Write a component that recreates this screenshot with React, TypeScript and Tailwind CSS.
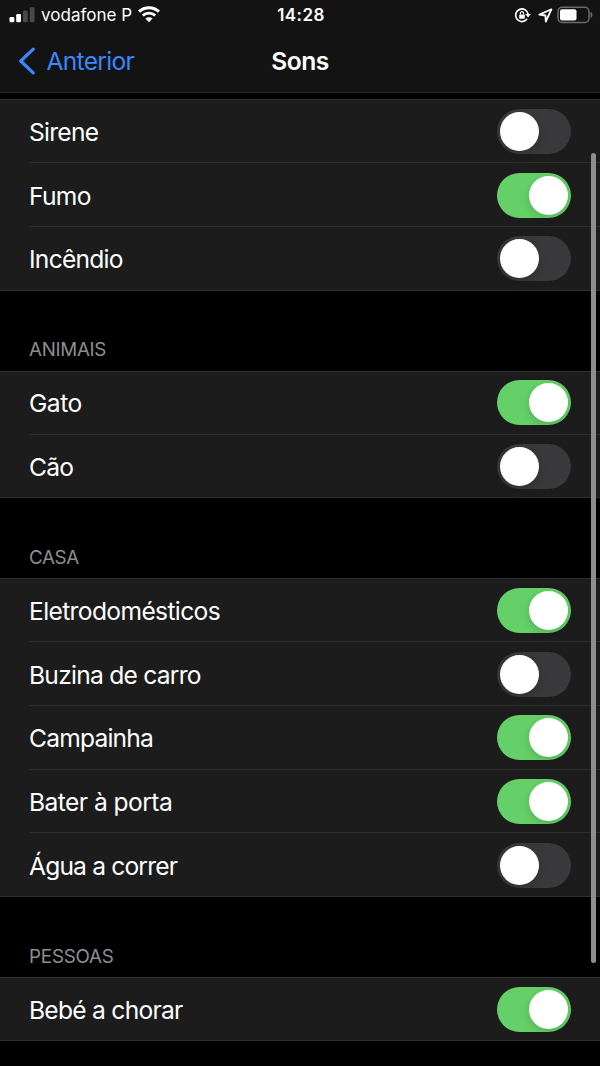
import { useState } from "react";
import clsx from "clsx";

type Sound = {
  label: string;
  enabled: boolean;
  text: string;
};

type SoundGroup = {
  title?: string;
  titleText?: string;
  sounds: Sound[];
};

const ROW_HEIGHT = 63.77;

const GROUPS: SoundGroup[] = [
  {
    sounds: [
      { label: "Sirene", enabled: false, text: "tracking-[-0.75px]" },
      { label: "Fumo", enabled: true, text: "tracking-[-0.7px]" },
      { label: "Incêndio", enabled: false, text: "tracking-[-0.75px]" },
    ],
  },
  {
    title: "Animais",
    titleText: "tracking-[-0.3px]",
    sounds: [
      { label: "Gato", enabled: true, text: "tracking-[-0.5px]" },
      { label: "Cão", enabled: false, text: "tracking-[-0.8px]" },
    ],
  },
  {
    title: "Casa",
    titleText: "tracking-[-0.4px]",
    sounds: [
      { label: "Eletrodomésticos", enabled: true, text: "tracking-[-0.63px]" },
      { label: "Buzina de carro", enabled: false, text: "tracking-[-0.75px]" },
      { label: "Campainha", enabled: true, text: "tracking-[-0.8px]" },
      { label: "Bater à porta", enabled: true, text: "tracking-[-0.55px]" },
      { label: "Água a correr", enabled: false, text: "tracking-[-0.83px]" },
    ],
  },
  {
    title: "Pessoas",
    titleText: "tracking-[-0.2px]",
    sounds: [{ label: "Bebé a chorar", enabled: true, text: "tracking-[-0.73px]" }],
  },
];

function StatusBar() {
  return (
    <div className="grid h-[30px] grid-cols-3 items-center pr-[7px] pl-[9px]">
      <div className="flex items-center">
        <svg width="26" height="16" viewBox="0 0 26 16">
          <rect x="0.5" y="9.9" width="4.8" height="5.4" rx="1.3" fill="#fff" />
          <rect x="7.2" y="7" width="4.8" height="8.3" rx="1.3" fill="#fff" />
          <rect x="14" y="3.6" width="4.8" height="11.7" rx="1.3" fill="#48484a" />
          <rect x="20.8" y="0.2" width="4.8" height="15.1" rx="1.3" fill="#48484a" />
        </svg>
        <span className="ml-[6px] text-[17px] leading-5 tracking-[0.02px] whitespace-nowrap">
          vodafone P
        </span>
        <svg className="-mt-[2px] ml-[6px]" width="22" height="17" viewBox="0 0 22 17" fill="none">
          <path d="M1.1 5.7a14.2 14.2 0 0 1 19.8 0" stroke="#fff" strokeWidth="3" />
          <path d="M4.8 9.6a9 9 0 0 1 12.4 0" stroke="#fff" strokeWidth="2.8" />
          <path d="M7.4 12.6a5.2 5.2 0 0 1 7.2 0L11 16.2z" fill="#fff" />
        </svg>
      </div>
      <span className="text-center text-[17px] leading-5 font-semibold tracking-[0.4px]">
        14:28
      </span>
      <div className="flex items-center justify-end">
        <svg width="17" height="16" viewBox="0 0 17 16" fill="none">
          <path
            d="M14.2 7.5a6.3 6.3 0 1 0-1.6 5"
            stroke="#fff"
            strokeWidth="1.7"
            strokeLinecap="round"
          />
          <path d="M11.2 7h5.6L14 10.6z" fill="#fff" />
          <rect x="5.2" y="7.4" width="5.6" height="4.4" rx="0.7" fill="#fff" />
          <path d="M6.4 7.6V6.2a1.6 1.6 0 0 1 3.2 0v1.4" stroke="#fff" strokeWidth="1.1" />
        </svg>
        <svg className="ml-[7px]" width="15" height="15" viewBox="0 0 15 15" fill="none">
          <path
            d="M13.4 1.3 1.4 6.6l6 .9.4 6z"
            stroke="#fff"
            strokeWidth="1.8"
            strokeLinejoin="round"
          />
        </svg>
        <svg className="ml-[4px]" width="36" height="18" viewBox="0 0 36 18" fill="none">
          <rect x="1" y="1.2" width="31" height="15.2" rx="4.2" stroke="#6b6b6d" strokeWidth="1.5" />
          <rect x="3" y="3.2" width="16.5" height="11.2" rx="2" fill="#fff" />
          <path d="M33.5 6c2.6 1 2.6 4.8 0 5.8z" fill="#6b6b6d" />
        </svg>
      </div>
    </div>
  );
}

function NavBar() {
  return (
    <div className="grid h-[63px] grid-cols-3 items-center border-b border-[#242424] pl-[18px]">
      <button type="button" className="flex items-center text-[#3b87fb]">
        <svg width="18" height="28" viewBox="0 0 18 28" fill="none">
          <path
            d="M15.2 2.2 2.7 14l12.5 11.8"
            stroke="currentColor"
            strokeWidth="3.2"
            strokeLinecap="round"
            strokeLinejoin="round"
          />
        </svg>
        <span className="ml-[10.5px] text-[24.6px] leading-[30px] tracking-[-0.7px]">Anterior</span>
      </button>
      <h1 className="mr-[18px] text-center text-[24.6px] leading-[30px] font-semibold tracking-[-0.5px]">
        Sons
      </h1>
    </div>
  );
}

type ToggleProps = {
  label: string;
  checked: boolean;
  onChange: (checked: boolean) => void;
};

function Toggle({ label, checked, onChange }: ToggleProps) {
  return (
    <button
      type="button"
      role="switch"
      aria-checked={checked}
      aria-label={label}
      onClick={() => onChange(!checked)}
      className={clsx(
        "mt-px flex h-[45px] w-[74px] shrink-0 items-center rounded-full px-[3px]",
        checked ? "justify-end bg-[#65d068]" : "justify-start bg-[#39393b]",
      )}
    >
      <span className="h-[39px] w-[39px] rounded-full bg-white shadow-[0_3px_8px_rgba(0,0,0,0.15)]" />
    </button>
  );
}

function SoundRow({ sound, last }: { sound: Sound; last: boolean }) {
  const [checked, setChecked] = useState(sound.enabled);

  return (
    <div
      className={clsx(
        "ml-[29px] flex items-center justify-between border-b pr-[29px]",
        last ? "border-transparent" : "border-[#2e2e2f]",
      )}
      style={{ height: ROW_HEIGHT }}
    >
      <span className={clsx("pt-[2px] text-[24.6px] leading-[30px]", sound.text)}>{sound.label}</span>
      <Toggle label={sound.label} checked={checked} onChange={setChecked} />
    </div>
  );
}

export default function App() {
  return (
    <div className="relative h-[1066px] w-[600px] overflow-hidden bg-black font-['Inter','Liberation_Sans',sans-serif] text-white">
      <header className="bg-[#131313]">
        <StatusBar />
        <NavBar />
      </header>

      <main className="pt-[6.4px]">
        {GROUPS.map((group, i) => (
          <section key={i}>
            {group.title ? (
              <h2
                className={clsx(
                  "flex h-[80.1px] items-end pb-[8.5px] pl-[29px] text-[18.8px] leading-6 text-[#8d8d92] uppercase",
                  group.titleText,
                )}
              >
                {group.title}
              </h2>
            ) : null}
            <div className="bg-[#1c1c1c] shadow-[inset_0_1px_0_#303031,inset_0_-1px_0_#303031]">
              {group.sounds.map((sound, j) => (
                <SoundRow key={sound.label} sound={sound} last={j === group.sounds.length - 1} />
              ))}
            </div>
          </section>
        ))}
      </main>

      <div className="absolute top-[153px] right-[4px] h-[810px] w-[5px] rounded-full bg-[#8e8e8e]" />
    </div>
  );
}
